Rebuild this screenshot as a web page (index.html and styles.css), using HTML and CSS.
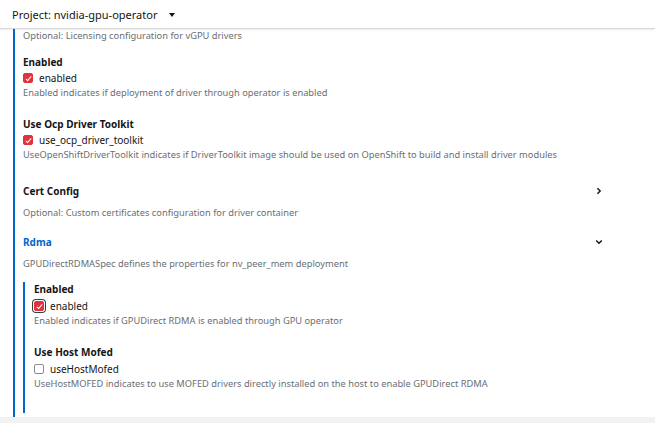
FILE: index.html
```html
<!DOCTYPE html>
<html>
<head>
<meta charset="utf-8">
<link rel="stylesheet" href="styles.css">
</head>
<body>
<header class="topbar">
  <span class="project">Project: nvidia-gpu-operator</span>
  <span class="caret"></span>
</header>
<main class="page">
  <section class="group outer">
    <p class="desc first">Optional: Licensing configuration for vGPU drivers</p>

    <div class="field">
      <div class="label">Enabled</div>
      <label class="check"><span class="box on"></span>enabled</label>
      <p class="desc">Enabled indicates if deployment of driver through operator is enabled</p>
    </div>

    <div class="field">
      <div class="label">Use Ocp Driver Toolkit</div>
      <label class="check"><span class="box on"></span>use_ocp_driver_toolkit</label>
      <p class="desc">UseOpenShiftDriverToolkit indicates if DriverToolkit image should be used on OpenShift to build and install driver modules</p>
    </div>

    <div class="expander">
      <div class="exp-head">
        <span class="label">Cert Config</span>
        <svg class="chev" viewBox="0 0 10 10" width="8" height="8"><path d="M3 1.5 L6.5 5 L3 8.5" fill="none" stroke="#151515" stroke-width="1.8"/></svg>
      </div>
      <p class="desc">Optional: Custom certificates configuration for driver container</p>
    </div>

    <div class="expander">
      <div class="exp-head">
        <span class="label link">Rdma</span>
        <svg class="chev" viewBox="0 0 10 10" width="8" height="8"><path d="M1.5 3 L5 6.5 L8.5 3" fill="none" stroke="#151515" stroke-width="1.8"/></svg>
      </div>
      <p class="desc">GPUDirectRDMASpec defines the properties for nv_peer_mem deployment</p>
    </div>

    <section class="group inner">
      <div class="field">
        <div class="label">Enabled</div>
        <label class="check"><span class="box on focus"></span>enabled</label>
        <p class="desc">Enabled indicates if GPUDirect RDMA is enabled through GPU operator</p>
      </div>
      <div class="field">
        <div class="label">Use Host Mofed</div>
        <label class="check"><span class="box"></span>useHostMofed</label>
        <p class="desc">UseHostMOFED indicates to use MOFED drivers directly installed on the host to enable GPUDirect RDMA</p>
      </div>
    </section>
  </section>
</main>
<footer class="bottom"></footer>
</body>
</html>
```
FILE: styles.css
```css
* { box-sizing: border-box; }
html, body { margin: 0; padding: 0; }
body {
  width: 655px;
  height: 423px;
  overflow: hidden;
  background: #fff;
  font-family: "Noto Sans", "Open Sans", sans-serif;
  color: #151515;
  display: flex;
  flex-direction: column;
}
.topbar {
  height: 29px;
  flex: none;
  display: flex;
  align-items: center;
  padding-left: 12px;
  gap: 12px;
  border-bottom: 1px solid #d8d8d8;
  box-shadow: 0 1px 2px rgba(0,0,0,0.08);
  font-size: 11px;
}
.caret {
  width: 0; height: 0;
  border-left: 3.5px solid transparent;
  border-right: 3.5px solid transparent;
  border-top: 4px solid #151515;
  margin-top: 1px;
}
.page {
  flex: 1;
  padding: 0 0 0 13px;
  min-height: 0;
  display: flex;
  flex-direction: column;
}
.group { border-left: 2px solid #0066cc; }
.outer {
  flex: 1;
  padding: 0 52px 0 8px;
}
.inner {
  margin-top: 11px;
  padding: 0 0 22px 9px;
}
p { margin: 0; }
.desc {
  font-size: 9.3px;
  color: #6a6e73;
  line-height: 14px;
}
.field { margin-top: 12px; }
.field + .field { margin-top: 17px; }
.inner .field { margin-top: 0; }
.inner .field + .field { margin-top: 17px; }
.label {
  font-size: 10px;
  font-weight: 700;
  line-height: 14px;
  margin-bottom: 1px;
}
.inner .label { margin-bottom: 2px; }
.exp-head .label { margin-bottom: 0; }
.link { color: #0066cc; }
.check {
  display: flex;
  align-items: center;
  gap: 6px;
  font-size: 10px;
  line-height: 14px;
  height: 16px;
}
.box {
  width: 10px; height: 10px;
  border: 1px solid #8a8d90;
  border-radius: 2px;
  background: #fff;
  position: relative;
  flex: none;
}
.box.on {
  background: #e0333b;
  border-color: #e0333b;
}
.box.on::after {
  content: "";
  position: absolute;
  left: 3px; top: 0.5px;
  width: 2px; height: 5px;
  border: solid #fff;
  border-width: 0 1.5px 1.5px 0;
  transform: rotate(40deg);
}
.box.focus {
  box-shadow: 0 0 0 1px #fff, 0 0 0 2px #3c3f42;
}
.expander { margin-top: 22px; }
.expander + .expander { margin-top: 15px; }
.exp-head {
  display: flex;
  justify-content: space-between;
  align-items: center;
  height: 14px;
  margin-bottom: 8px;
}
.expander:first-of-type .exp-head { margin-bottom: 7px; }
.bottom {
  height: 6px;
  flex: none;
  background: #f2f2f2;
}
```
